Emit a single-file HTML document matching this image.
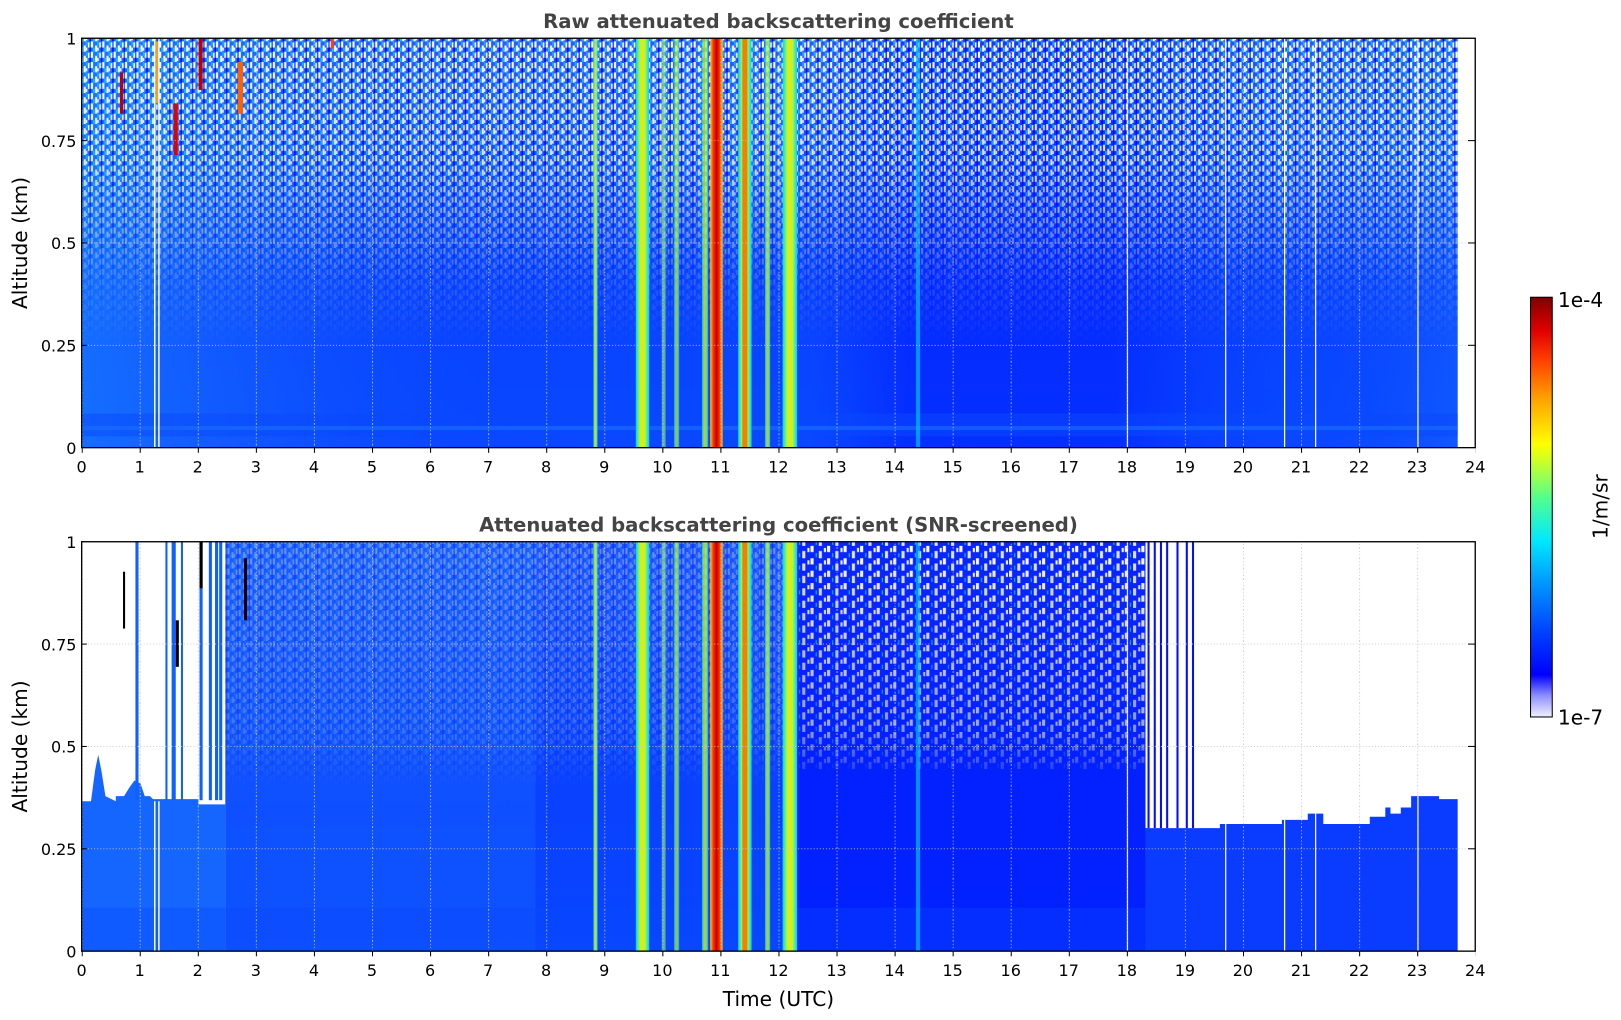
<!DOCTYPE html>
<html><head><meta charset="utf-8"><style>
html,body{margin:0;padding:0;background:#fff;width:1621px;height:1020px;overflow:hidden}
svg{display:block}
text{font-family:"DejaVu Sans","Liberation Sans",sans-serif}
</style></head><body>
<svg width="1621" height="1020" viewBox="0 0 1568 986.6" preserveAspectRatio="none" xmlns="http://www.w3.org/2000/svg">
<defs>
 <linearGradient id="vt" x1="0" y1="0" x2="0" y2="1">
  <stop offset="0" stop-color="#2a5cff"/><stop offset="0.3" stop-color="#1a4cff"/>
  <stop offset="0.55" stop-color="#0a40ff"/><stop offset="1" stop-color="#0848ff"/>
 </linearGradient>
 <linearGradient id="hz" x1="0" y1="0" x2="1" y2="0">
  <stop offset="0" stop-color="#1a80ff" stop-opacity="0.7"/><stop offset="0.12" stop-color="#1a70ff" stop-opacity="0.4"/>
  <stop offset="0.3" stop-color="#0a50ff" stop-opacity="0"/><stop offset="0.53" stop-color="#0020ff" stop-opacity="0"/>
  <stop offset="0.6" stop-color="#0010ff" stop-opacity="0.45"/><stop offset="0.75" stop-color="#0010ff" stop-opacity="0.45"/>
  <stop offset="0.9" stop-color="#0a50ff" stop-opacity="0.1"/><stop offset="1" stop-color="#1a70ff" stop-opacity="0.4"/>
 </linearGradient>
 <linearGradient id="fade" x1="0" y1="0" x2="0" y2="1">
  <stop offset="0" stop-color="#fff" stop-opacity="1"/><stop offset="0.3" stop-color="#fff" stop-opacity="0.85"/>
  <stop offset="0.6" stop-color="#fff" stop-opacity="0.15"/><stop offset="0.75" stop-color="#fff" stop-opacity="0"/>
 </linearGradient>
 <mask id="fm"><rect x="0" y="37" width="1568" height="396" fill="url(#fade)"/></mask>
 <linearGradient id="fade2" x1="0" y1="0" x2="0" y2="1">
  <stop offset="0" stop-color="#fff" stop-opacity="1"/><stop offset="0.45" stop-color="#fff" stop-opacity="0.6"/>
  <stop offset="0.6" stop-color="#fff" stop-opacity="0"/><stop offset="1" stop-color="#fff" stop-opacity="0"/>
 </linearGradient>
 <mask id="fm2"><rect x="0" y="524" width="1568" height="396" fill="url(#fade2)"/></mask>
 <pattern id="sp" width="11" height="10" patternUnits="userSpaceOnUse">
  <rect x="0" y="0" width="2" height="6" fill="#fff"/><rect x="4" y="4" width="2" height="6" fill="#fff"/>
  <rect x="8" y="1" width="1.5" height="5" fill="#fff"/><rect x="2" y="6" width="1.5" height="4" fill="#00d8ff"/>
  <rect x="9.5" y="6" width="1.5" height="4" fill="#0000ff"/><rect x="6" y="0" width="1.5" height="4" fill="#00c0ff"/>
  <rect x="6" y="6" width="1.5" height="3" fill="#fff"/>
 </pattern>
 <pattern id="sp2" width="16" height="12" patternUnits="userSpaceOnUse">
  <rect x="0" y="0" width="3" height="6" fill="#fff"/><rect x="8" y="5" width="3" height="7" fill="#e8e8ff"/>
  <rect x="13" y="2" width="2" height="4" fill="#fff"/><rect x="5" y="7" width="1" height="4" fill="#00e0ff"/>
 </pattern>
 <linearGradient id="ylw" x1="0" y1="0" x2="1" y2="0">
  <stop offset="0" stop-color="#00d0ff"/><stop offset="0.3" stop-color="#a0ff40"/><stop offset="0.5" stop-color="#ffe000"/><stop offset="0.7" stop-color="#a0ff40"/><stop offset="1" stop-color="#00d0ff"/>
 </linearGradient>
 <linearGradient id="red" x1="0" y1="0" x2="1" y2="0">
  <stop offset="0" stop-color="#ffd000"/><stop offset="0.25" stop-color="#ff3000"/><stop offset="0.5" stop-color="#c00000"/><stop offset="0.75" stop-color="#ff3000"/><stop offset="1" stop-color="#ffd000"/>
 </linearGradient>
 <linearGradient id="cb" x1="0" y1="1" x2="0" y2="0">
  <stop offset="0" stop-color="#f0f0ff"/><stop offset="0.05" stop-color="#9090ff"/><stop offset="0.1" stop-color="#0000ff"/>
  <stop offset="0.2" stop-color="#0040ff"/><stop offset="0.33" stop-color="#00a0ff"/><stop offset="0.42" stop-color="#00e8ff"/>
  <stop offset="0.52" stop-color="#50ff90"/><stop offset="0.6" stop-color="#c0ff30"/><stop offset="0.65" stop-color="#ffff00"/>
  <stop offset="0.76" stop-color="#ffa000"/><stop offset="0.85" stop-color="#ff4000"/><stop offset="0.92" stop-color="#e00000"/><stop offset="1" stop-color="#800000"/>
 </linearGradient>
 <pattern id="gx" x="79" y="0" width="56.167" height="10" patternUnits="userSpaceOnUse">
  <line x1="0.5" y1="0" x2="0.5" y2="10" stroke="#c8c8c8" stroke-width="0.8" stroke-dasharray="1,2"/>
 </pattern>
 <pattern id="tk" x="79" y="0" width="56.167" height="10" patternUnits="userSpaceOnUse">
  <line x1="0.5" y1="0" x2="0.5" y2="10" stroke="#000" stroke-width="1"/>
 </pattern>
 <g id="streaks">
  <rect x="574" y="0" width="4" height="396" fill="url(#ylw)" opacity="0.9"/>
  <rect x="615" y="0" width="13" height="396" fill="url(#ylw)"/>
  <rect x="640" y="0" width="4" height="396" fill="url(#ylw)" opacity="0.6"/>
  <rect x="652" y="0" width="5" height="396" fill="url(#ylw)" opacity="0.7"/>
  <rect x="679" y="0" width="6" height="396" fill="url(#ylw)" opacity="0.8"/>
  <rect x="687" y="0" width="12" height="396" fill="url(#red)"/>
  <rect x="714" y="0" width="13" height="396" fill="url(#ylw)"/>
  <rect x="718" y="0" width="5" height="396" fill="#ff5000" opacity="0.7"/>
  <rect x="740" y="0" width="5" height="396" fill="url(#ylw)" opacity="0.8"/>
  <rect x="757" y="0" width="14" height="396" fill="url(#ylw)"/>
  <rect x="886" y="0" width="4" height="396" fill="#00c0ff" opacity="0.7"/>
 </g>
</defs>

<!-- Top plot -->
<text x="753" y="27" text-anchor="middle" font-size="19" font-weight="bold" fill="#444">Raw attenuated backscattering coefficient</text>
<rect x="79" y="37" width="1331" height="396" fill="url(#vt)"/>
<rect x="79" y="37" width="1331" height="396" fill="url(#hz)"/>
<rect x="79" y="37" width="1331" height="396" fill="url(#sp)" mask="url(#fm)"/>
<rect x="79" y="400" width="1331" height="22" fill="#0a48ff" opacity="0.5"/>
<rect x="79" y="412" width="1331" height="4" fill="#1a70ff" opacity="0.6"/>
<g transform="translate(0,37)"><use href="#streaks"/></g>
<rect x="116" y="70" width="3" height="40" fill="#c00000"/>
<rect x="151" y="40" width="3" height="60" fill="#ffa000"/>
<rect x="168" y="100" width="4" height="50" fill="#e00000"/>
<rect x="192" y="37" width="4" height="50" fill="#c00000"/>
<rect x="230" y="60" width="5" height="50" fill="#ff6000"/>
<rect x="320" y="37" width="3" height="10" fill="#ff4000"/>
<g fill="#fff">
<rect x="149" y="37" width="1.4" height="396"/><rect x="153" y="37" width="1.4" height="396"/>
<rect x="1090" y="37" width="1.2" height="396"/><rect x="1185" y="37" width="1.2" height="396"/>
<rect x="1242" y="37" width="1.2" height="396"/><rect x="1272" y="37" width="1.2" height="396"/>
<rect x="1371" y="37" width="1.2" height="396"/>
</g>
<rect x="79" y="37" width="1348" height="396" fill="url(#gx)"/>
<g stroke="#c8c8c8" stroke-width="0.8" stroke-dasharray="1,2"><line x1="79" y1="136" x2="1427" y2="136"/><line x1="79" y1="235" x2="1427" y2="235"/><line x1="79" y1="334" x2="1427" y2="334"/></g>
<rect x="79" y="37" width="1348" height="396" fill="none" stroke="#000" stroke-width="1.3"/>
<rect x="79" y="433" width="1348" height="5" fill="url(#tk)"/>
<g stroke="#000"><line x1="79" y1="136" x2="84" y2="136"/><line x1="79" y1="235" x2="84" y2="235"/><line x1="79" y1="334" x2="84" y2="334"/>
<line x1="1420" y1="136" x2="1427" y2="136"/><line x1="1420" y1="235" x2="1427" y2="235"/><line x1="1420" y1="334" x2="1427" y2="334"/></g>
<g font-size="15.5" text-anchor="end"><text x="74" y="43">1</text><text x="74" y="142">0.75</text><text x="74" y="241">0.5</text><text x="74" y="340">0.25</text><text x="74" y="439">0</text></g>
<text transform="translate(26,235) rotate(-90)" text-anchor="middle" font-size="19.5">Altitude (km)</text>
<g font-size="15.5" text-anchor="middle">
<text x="79" y="457">0</text><text x="135.2" y="457">1</text><text x="191.3" y="457">2</text><text x="247.5" y="457">3</text><text x="303.7" y="457">4</text><text x="359.8" y="457">5</text><text x="416" y="457">6</text><text x="472.2" y="457">7</text><text x="528.3" y="457">8</text><text x="584.5" y="457">9</text><text x="640.7" y="457">10</text><text x="696.8" y="457">11</text><text x="753" y="457">12</text><text x="809.2" y="457">13</text><text x="865.3" y="457">14</text><text x="921.5" y="457">15</text><text x="977.7" y="457">16</text><text x="1033.8" y="457">17</text><text x="1090" y="457">18</text><text x="1146.2" y="457">19</text><text x="1202.3" y="457">20</text><text x="1258.5" y="457">21</text><text x="1314.7" y="457">22</text><text x="1370.8" y="457">23</text><text x="1427" y="457">24</text>
</g>

<!-- Bottom plot -->
<text x="753" y="514" text-anchor="middle" font-size="19" font-weight="bold" fill="#444">Attenuated backscattering coefficient (SNR-screened)</text>
<rect x="218" y="524" width="890" height="396" fill="url(#vt)"/>
<rect x="218" y="524" width="890" height="396" fill="#0a40ff" opacity="0.4"/>
<rect x="218" y="524" width="300" height="396" fill="#1a6cff" opacity="0.35"/>
<rect x="760" y="524" width="348" height="396" fill="#0010ff" opacity="0.65"/>
<rect x="218" y="524" width="540" height="396" fill="url(#sp)" mask="url(#fm2)" opacity="0.35"/>
<rect x="760" y="524" width="348" height="220" fill="url(#sp2)" mask="url(#fm2)"/>
<!-- left low region -->
<path d="M79 920 V775 H88 L92 745 L95 730 L98 745 L102 770 L112 775 V770 H120 L125 762 L130 755 L136 758 L140 770 H145 L148 773 H192 V778 H218 V920 Z" fill="#1466ff"/>
<rect x="79" y="878" width="1029" height="42" fill="#0a48ff" opacity="0.35"/>
<g fill="#1060ff"><rect x="131" y="524" width="3" height="250"/><rect x="160" y="524" width="2" height="250"/><rect x="166" y="524" width="4" height="250"/><rect x="175" y="524" width="2" height="250"/><rect x="193" y="524" width="3" height="250"/><rect x="202" y="524" width="3" height="250"/><rect x="208" y="524" width="3" height="250"/><rect x="212" y="524" width="3" height="250"/></g>
<g fill="#000"><rect x="119" y="553" width="2" height="55"/><rect x="170" y="600" width="3" height="45"/><rect x="193" y="524" width="3" height="45"/><rect x="236" y="540" width="3" height="60"/></g>
<!-- right region -->
<path d="M1108 920 V801 H1180 V797 H1240 V793 H1265 V787 H1280 V797 H1325 V790 H1340 V781 H1345 V787 H1355 V781 H1365 V770 H1392 V773 H1410 V920 Z" fill="#0a3cff"/>
<g fill="#0010ff"><rect x="1110" y="524" width="2" height="277"/><rect x="1116" y="524" width="2" height="277"/><rect x="1122" y="524" width="2" height="277"/><rect x="1128" y="524" width="2" height="277"/><rect x="1138" y="524" width="2" height="277"/><rect x="1147" y="524" width="2" height="277"/><rect x="1153" y="524" width="2" height="277"/></g>
<g transform="translate(0,524)"><use href="#streaks"/></g>
<g fill="#fff">
<rect x="149" y="775" width="1.4" height="145"/><rect x="153" y="775" width="1.4" height="145"/>
<rect x="1090" y="524" width="1.2" height="396"/><rect x="1185" y="797" width="1.2" height="123"/>
<rect x="1242" y="793" width="1.2" height="127"/><rect x="1272" y="787" width="1.2" height="133"/>
<rect x="1371" y="770" width="1.2" height="150"/>
</g>
<rect x="79" y="524" width="1348" height="396" fill="url(#gx)"/>
<g stroke="#c8c8c8" stroke-width="0.8" stroke-dasharray="1,2"><line x1="79" y1="623" x2="1427" y2="623"/><line x1="79" y1="722" x2="1427" y2="722"/><line x1="79" y1="821" x2="1427" y2="821"/></g>
<rect x="79" y="524" width="1348" height="396" fill="none" stroke="#000" stroke-width="1.3"/>
<rect x="79" y="920" width="1348" height="5" fill="url(#tk)"/>
<g stroke="#000"><line x1="79" y1="623" x2="84" y2="623"/><line x1="79" y1="722" x2="84" y2="722"/><line x1="79" y1="821" x2="84" y2="821"/>
<line x1="1420" y1="623" x2="1427" y2="623"/><line x1="1420" y1="722" x2="1427" y2="722"/><line x1="1420" y1="821" x2="1427" y2="821"/></g>
<g font-size="15.5" text-anchor="end"><text x="74" y="530">1</text><text x="74" y="629">0.75</text><text x="74" y="728">0.5</text><text x="74" y="827">0.25</text><text x="74" y="926">0</text></g>
<text transform="translate(26,722) rotate(-90)" text-anchor="middle" font-size="19.5">Altitude (km)</text>
<g font-size="15.5" text-anchor="middle">
<text x="79" y="944">0</text><text x="135.2" y="944">1</text><text x="191.3" y="944">2</text><text x="247.5" y="944">3</text><text x="303.7" y="944">4</text><text x="359.8" y="944">5</text><text x="416" y="944">6</text><text x="472.2" y="944">7</text><text x="528.3" y="944">8</text><text x="584.5" y="944">9</text><text x="640.7" y="944">10</text><text x="696.8" y="944">11</text><text x="753" y="944">12</text><text x="809.2" y="944">13</text><text x="865.3" y="944">14</text><text x="921.5" y="944">15</text><text x="977.7" y="944">16</text><text x="1033.8" y="944">17</text><text x="1090" y="944">18</text><text x="1146.2" y="944">19</text><text x="1202.3" y="944">20</text><text x="1258.5" y="944">21</text><text x="1314.7" y="944">22</text><text x="1370.8" y="944">23</text><text x="1427" y="944">24</text>
</g>
<text x="753" y="973" text-anchor="middle" font-size="19.5">Time (UTC)</text>

<!-- colorbar -->
<rect x="1480.5" y="287.5" width="21" height="406" fill="url(#cb)" stroke="#000" stroke-width="1"/>
<text x="1507" y="297" font-size="19.5">1e-4</text>
<text x="1507" y="701" font-size="19.5">1e-7</text>
<text transform="translate(1555,490) rotate(-90)" text-anchor="middle" font-size="19.5">1/m/sr</text>
</svg>
</body></html>
